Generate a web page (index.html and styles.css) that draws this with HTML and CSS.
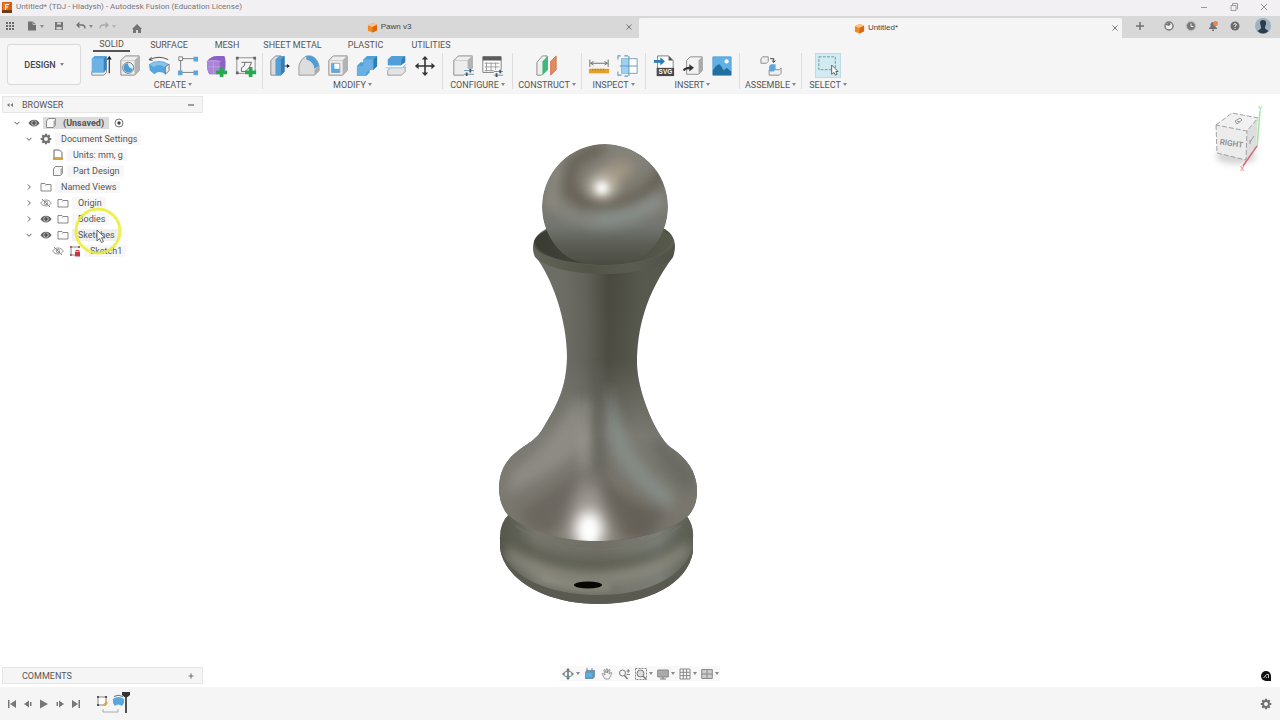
FILE: index.html
```html
<!DOCTYPE html>
<html lang="en">
<head>
<meta charset="utf-8">
<meta name="viewport" content="width=device-width, initial-scale=1">
<title>Untitled* - Autodesk Fusion</title>
<link rel="stylesheet" href="styles.css">
</head>
<body>
<svg class="sprite" aria-hidden="true">
  <symbol id="down" viewBox="0 0 12 12"><path d="M3.500 4.800 6 7.300 8.500 4.800" fill="none" stroke="#555" stroke-width="1"/></symbol>
  <symbol id="right" viewBox="0 0 12 12"><path d="M4.800 3.500 7.300 6 4.800 8.500" fill="none" stroke="#666" stroke-width="1"/></symbol>
  <symbol id="eye" viewBox="0 0 12 12"><path d="M.5 6C3 1.500 9 1.500 11.500 6 9 10.500 3 10.500.5 6Z" fill="#5c5c5c"/><circle cx="6" cy="6" r="2.600" fill="#ddd"/><circle cx="6" cy="6" r="1.900" fill="#555"/></symbol>
  <symbol id="eye-off" viewBox="0 0 12 12"><path d="M.7 6C3 2 9 2 11.300 6 9 10 3 10 .7 6Z" fill="none" stroke="#999"/><circle cx="6" cy="6" r="1.800" fill="none" stroke="#999"/><path d="M2 2 10 10" stroke="#888"/></symbol>
  <symbol id="folder" viewBox="0 0 12 12"><path d="M1 2.500H5L6 3.500H11V10H1Z M6 3.500 5.500 4.500" fill="#fafafa" stroke="#888"/></symbol>
  <symbol id="part" viewBox="0 0 12 12"><path d="M1.500 4 3.500 1.500H10.500V8L8.500 10.500H1.500Z" fill="#f8f8f8" stroke="#888"/><path d="M8.500 10V4.500L10.500 2V8Z" fill="#aaa"/></symbol>
  <symbol id="gear" viewBox="0 0 12 12"><g stroke="#707070" stroke-width="2.200"><path d="M6 .7V11.300M.7 6H11.300M2.300 2.300 9.700 9.700M9.700 2.300 2.300 9.700"/></g><circle cx="6" cy="6" r="3.900" fill="#707070"/><circle cx="6" cy="6" r="2" fill="#f5f5f5"/></symbol>
  <symbol id="model" viewBox="0 0 12 12"><path d="M1 3.500 6 1 11 3V9L6 11.500 1 9.500Z" fill="#f08a24"/><path d="M1 3.500 6 1 11 3 6 5.500Z" fill="#ffc388"/><path d="M6 5.500 11 3V9L6 11.500Z" fill="#d96814"/></symbol>
  <symbol id="box" viewBox="0 0 24 24"><path d="M2 6 7 1H22V17L17 22H2Z" fill="#ededed" stroke="#888"/><path d="M17 22V6L22 1V17Z" fill="#b4b4b4"/><path d="M2 6H17L22 1" fill="none" stroke="#bbb" stroke-width=".7"/></symbol>
</svg>

<header class="titlebar">
  <svg class="app-icon" viewBox="0 0 10 11"><rect width="10" height="11" rx="1" fill="#d95c0c"/><path d="M1 1H8L5 10H1Z" fill="#ef7b18"/><path d="M0 8H10V11H0Z" fill="#713b18"/><path d="M3.500 8V2.500H7M3.500 5H6" stroke="#fff" fill="none"/></svg>
  <h1 class="window-title">Untitled* (TDJ - Hladysh) - Autodesk Fusion (Education License)</h1>
  <div class="window-controls">
    <button aria-label="Minimize"><svg viewBox="0 0 10 10"><path d="M2 5.500H8" stroke="#999"/></svg></button>
    <button aria-label="Restore"><svg viewBox="0 0 10 10"><path d="M2 3.500H7V8.500H2ZM3.500 3V1.500H8.500V7H7.500" fill="none" stroke="#888" stroke-width=".8"/></svg></button>
    <button aria-label="Close"><svg viewBox="0 0 10 10"><path d="M2 2 8 8M8 2 2 8" stroke="#888" stroke-width=".8"/></svg></button>
  </div>
</header>

<div class="tabbar">
  <div class="quick">
    <button class="panel-toggle" aria-label="Data panel"><svg viewBox="0 0 12 12"><path d="M2 3H10M2 6H10M2 9H10" stroke="#6d6d6d" stroke-width="2" stroke-dasharray="2 1"/></svg></button>
    <button class="with-caret" aria-label="File"><svg viewBox="0 0 12 12"><path d="M2 1.500H7L10 4.500V10.500H2Z" fill="#717171"/><path d="M7 1.500V4.500H10" stroke="#ddd" stroke-width=".7" fill="none"/></svg><i class="caret"></i></button>
    <button class="save" aria-label="Save"><svg viewBox="0 0 12 12"><path d="M2 2H10V10H2Z" fill="#777"/><path d="M4 2.500H8V4.500H4ZM3.500 7H8.500V9.500H3.500Z" fill="#d6d6d6"/></svg></button>
    <button class="undo" aria-label="Undo"><svg viewBox="0 0 12 12"><path d="M2 5H7Q10 5 10 8.500M4.500 2.500 2 5 4.500 7.500" fill="none" stroke="#707070" stroke-width="1.300"/></svg><i class="caret"></i></button>
    <button class="with-caret faded" aria-label="Redo"><svg viewBox="0 0 12 12"><path d="M10 5H5Q2 5 2 8.500M7.500 2.500 10 5 7.500 7.500" fill="none" stroke="#707070" stroke-width="1.300"/></svg><i class="caret"></i></button>
    <button class="home" aria-label="Home"><svg viewBox="0 0 12 12"><path d="M1 7 6 2 11 7H10V11H7V8H5V11H2V7Z" fill="#747474"/></svg></button>
  </div>
  <div class="doc-tab"><button class="doc-name"><svg viewBox="0 0 12 12"><use href="#model"/></svg>Pawn v3</button><button class="doc-close" aria-label="Close Pawn v3"><svg viewBox="0 0 10 10"><path d="M2.500 2.500 7.500 7.500M7.500 2.500 2.500 7.500" stroke="#777"/></svg></button></div>
  <div class="doc-tab active"><button class="doc-name"><svg viewBox="0 0 12 12"><use href="#model"/></svg>Untitled*</button><button class="doc-close" aria-label="Close Untitled"><svg viewBox="0 0 10 10"><path d="M2.500 2.500 7.500 7.500M7.500 2.500 2.500 7.500" stroke="#777"/></svg></button></div>
  <div class="account">
    <button class="plus" aria-label="New design"><svg viewBox="0 0 12 12"><path d="M6 2V10M2 6H10" stroke="#707070" stroke-width="1.500"/></svg></button>
    <button aria-label="Extensions"><svg viewBox="0 0 12 12"><circle cx="6" cy="6" r="4" fill="#eee" stroke="#777" stroke-width="1.400"/><path d="M3 4 6 2.500 8 4 6 6 3 5Z" fill="#777"/></svg></button>
    <button aria-label="Job status"><svg viewBox="0 0 12 12"><circle cx="6" cy="6" r="4" fill="#777"/><circle cx="6" cy="6" r="4.700" fill="none" stroke="#aaa" stroke-width=".7"/><path d="M6 3.500V6.500H8.500" fill="none" stroke="#eee"/></svg></button>
    <button aria-label="Notifications"><svg viewBox="0 0 12 12"><path d="M2 9V8L3.500 7V4Q4 2 6 2 8.500 2 8.500 5V7L10 8V9ZM5 9.500H7V11H5Z" fill="#707070"/><circle cx="8.500" cy="3.500" r="2.500" fill="#e88650"/></svg></button>
    <button aria-label="Help"><svg viewBox="0 0 12 12"><circle cx="6" cy="6" r="4.500" fill="#6c6c6c"/><path d="M4.500 4.500Q6 2.500 7.500 4.500 7.500 5.500 6 6.300V7M6 8V9" fill="none" stroke="#fff"/></svg></button>
    <button class="avatar" aria-label="Profile"><svg viewBox="0 0 16 16"><circle cx="8" cy="8" r="8" fill="#9db2c2"/><path d="M5 5Q5 2 8 2 11.500 2 11 6L10 9V10.500L13.500 13Q8 18 2.500 13L6 10.500V9Z" fill="#2c3d4c"/></svg></button>
  </div>
</div>

<div class="ribbon">
  <button class="workspace">DESIGN<i class="caret"></i></button>
  <div class="ribbon-main">
    <nav class="ribbon-tabs">
      <button class="current">SOLID</button><button>SURFACE</button><button>MESH</button><button class="wide">SHEET METAL</button><button class="wide">PLASTIC</button><button>UTILITIES</button>
    </nav>
    <div class="groups">
      <section class="group create">
        <div class="tools">
          <button aria-label="Extrude"><svg viewBox="0 0 24 24"><path d="M2 18V22H15L18 19V3" fill="#eee" stroke="#888"/><path d="M2 4 5 1H18V15L15 19H2Z" fill="#5aa4dc"/><path d="M2 4H15V19H2Z" fill="#6bb3e7"/><path d="M15 4 18 1V15L15 19Z" fill="#3b82b8"/><path d="M21 20V3M19 5 21 2 23 5" fill="none" stroke="#222" stroke-width="1.200"/></svg></button>
          <button aria-label="Hole"><svg viewBox="0 0 24 24"><use href="#box"/><circle cx="10" cy="14" r="6" fill="#e1eff9" stroke="#777"/><path d="M10 9A5 5 0 1 0 15 15 5 5 0 0 1 10 9Z" fill="#4b9bd7"/></svg></button>
          <button aria-label="Revolve"><svg viewBox="0 0 24 24"><path d="M1 10Q12 3 23 10V17L19 21Q12 16 7 21L2 17Z" fill="#57a5de"/><path d="M2 10Q12 5 22 10L18 13Q12 9 6 13Z" fill="#86c4ef"/><path d="M19 13 23 10V17L19 21Z" fill="#eee" stroke="#777"/><path d="M2 5Q12 0 22 5M4 2.500 1 5 5 6" fill="none" stroke="#444"/></svg></button>
          <button aria-label="Create sketch"><svg viewBox="0 0 24 24"><path d="M5 4H20M4 5V19H20" fill="none" stroke="#777"/><path d="M2 2H6V6H2Z" fill="#fff" stroke="#777"/><path d="M18 2H23V7H18ZM1 17H6V22H1ZM18 17H23V22H18Z" fill="#5da6da"/></svg></button>
          <button aria-label="Create form"><svg viewBox="0 0 24 24"><path d="M1 7Q5 1 12 1H20Q22 4 21 16L16 21H4Q1 18 1 7Z" fill="#8c62c4"/><path d="M1 7Q6 4 15 7V20Q7 22 3 20Q1 16 1 7Z" fill="#a984d8"/><path d="M1 7Q8 5 16 7M8 6V20M2 13H16" fill="none" stroke="#bfa2e2"/><path d="M15 13H19V17H23V21H19V24H15V21H11V17H15Z" fill="#27a850"/></svg></button>
          <button aria-label="Derive"><svg viewBox="0 0 24 24"><path d="M2 3H22V20H2Z" fill="none" stroke="#888"/><path d="M1 2H4V5H1ZM20 2H23V5H20ZM1 18H4V21H1Z" fill="#666"/><path d="M7 8H18Q17 14 11 18H7V14Q11 13 11 8" fill="none" stroke="#666"/><path d="M15 13H19V17H23V21H19V24H15V21H11V17H15Z" fill="#27a850"/></svg></button>
        </div>
        <button class="group-name">CREATE<i class="caret"></i></button>
      </section>
      <section class="group modify">
        <div class="tools">
          <button aria-label="Press pull"><svg viewBox="0 0 24 24"><path d="M2 6 7 1H13V22H2Z" fill="#ddd" stroke="#888"/><path d="M7 5 11 1H17V18L13 22H7Z" fill="#559fd6"/><path d="M13 5 17 1V18L13 22Z" fill="#397eb2"/><path d="M17 12H22M20 10.500 22 12 20 13.500Z" fill="#222" stroke="#222"/></svg></button>
          <button aria-label="Fillet"><svg viewBox="0 0 24 24"><path d="M1 11Q3 4 9 1H14Q21 3 23 12V17L18 22H1Z" fill="#ddd" stroke="#999"/><path d="M9 1H14Q21 3 23 12L18 15Q17 7 9 5Z" fill="#4f9dd6"/><path d="M18 16V22L23 17V12Z" fill="#aaa"/></svg></button>
          <button aria-label="Shell"><svg viewBox="0 0 24 24"><use href="#box"/><path d="M5 9H14V19H5Z" fill="#fff" stroke="#999"/><path d="M5 9H8V15H14V19H5Z" fill="#5caae0"/></svg></button>
          <button aria-label="Combine"><svg viewBox="0 0 24 24"><path d="M1 12 5 8H8V5L12 1H23V12L19 16H15V19L11 23H1Z" fill="#4f9fd8"/><path d="M8 5H19V16H15L11 19V23H1V12H8Z" fill="#69b0e4"/><path d="M19 5 23 1V12L19 16Z" fill="#327cb0"/></svg></button>
          <button aria-label="Split body"><svg viewBox="0 0 24 24"><path d="M3 5 7 1H22V8L18 12H3Z" fill="#4f9fd8"/><path d="M18 5 22 1V8L18 12Z" fill="#327cb0"/><path d="M3 17 7 13H22V18L18 22H3Z" fill="#e4e4e4" stroke="#999"/><path d="M1 13H18L23 9" fill="none" stroke="#fff" stroke-width="3"/><path d="M1 14H19L23 10" fill="none" stroke="#80b5d8"/></svg></button>
          <button aria-label="Move"><svg viewBox="0 0 24 24"><path d="M12 3V21M3 12H21" stroke="#333" stroke-width="1.700"/><path d="M12 1 15.500 5H8.500ZM12 23 8.500 19H15.500ZM1 12 5 8.500V15.500ZM23 12 19 15.500V8.500Z" fill="#333"/></svg></button>
        </div>
        <button class="group-name">MODIFY<i class="caret"></i></button>
      </section>
      <section class="group configure">
        <div class="tools">
          <button aria-label="Configure"><svg viewBox="0 0 24 24"><use href="#box"/><path d="M13 15H24V24H13Z" fill="#f5f5f5"/><path d="M13 17H24M13 21H24" stroke="#5e8dad"/><path d="M20 15V19M16 19V23" stroke="#456" stroke-width="2"/></svg></button>
          <button aria-label="Configuration table"><svg viewBox="0 0 24 24"><path d="M2 2H22V19H2Z" fill="#fff" stroke="#777"/><path d="M2 1.500H22V6H2Z" fill="#5c5c5c"/><path d="M4 9H20M4 13H20M4 17H20M6 8V18M11 8V18M16 8V18" stroke="#999"/><path d="M14 16H24V24H14Z" fill="#f5f5f5"/><path d="M14 18H24M14 22H24" stroke="#5e8dad"/><path d="M21 16V20M17 20V24" stroke="#456" stroke-width="2"/></svg></button>
        </div>
        <button class="group-name">CONFIGURE<i class="caret"></i></button>
      </section>
      <section class="group construct">
        <div class="tools"><button aria-label="Construct plane"><svg viewBox="0 0 24 24"><path d="M1 8 7 1H12V16L6 22H1Z" fill="#eee" stroke="#888"/><path d="M7 7 13 1V16L7 22Z" fill="#40b77c"/><path d="M16 7 22 1V16L16 22Z" fill="#e6895d" stroke="#cc7653"/></svg></button></div>
        <button class="group-name">CONSTRUCT<i class="caret"></i></button>
      </section>
      <section class="group inspect">
        <div class="tools">
          <button aria-label="Measure"><svg viewBox="0 0 24 24"><path d="M2 5V13M22 5V13M3 9H21M6 7 3 9 6 11M18 7 21 9 18 11" fill="none" stroke="#666"/><path d="M1 15H23V20H1Z" fill="#e0a02c"/><path d="M5 15V17M8 15V17M11 15V17M14 15V17M17 15V17" stroke="#b37a1f"/></svg></button>
          <button aria-label="Section"><svg viewBox="0 0 24 24"><path d="M5 4H22V20H5Z" fill="#fff" stroke="#779cae"/><path d="M5 4H13V20H5Z" fill="#9dd1f1"/><path d="M13 1V23M3 12H22M4 1H1V5M1 18V22H5M8 1H12M8 23H12" fill="none" stroke="#619dbd" stroke-width="1.200"/></svg></button>
        </div>
        <button class="group-name">INSPECT<i class="caret"></i></button>
      </section>
      <section class="group insert">
        <div class="tools">
          <button aria-label="Insert SVG"><svg viewBox="0 0 24 24"><path d="M5 1H17L22 6V22H5Z" fill="#fff" stroke="#777"/><path d="M17 1V6H22Z" fill="#555"/><path d="M4 14H23V23H4Z" fill="#484848"/><path d="M1 7H9" stroke="#267eb6" stroke-width="3"/><path d="M8 2.500 13 7 8 11.500Z" fill="#267eb6"/><text class="svg-mark" x="13.500" y="21" text-anchor="middle">SVG</text></svg></button>
          <button aria-label="Insert derive"><svg viewBox="0 0 24 24"><path d="M5 6 9 2H22V17L18 21H5Z" fill="#f2f2f2" stroke="#888"/><path d="M18 6 22 2V17L18 21Z" fill="#aaa"/><path d="M2 17Q3 14 9 14" fill="none" stroke="#333" stroke-width="2.500"/><path d="M8 10 13 14 8 18Z" fill="#333"/></svg></button>
          <button aria-label="Insert image"><svg viewBox="0 0 24 24"><path d="M2 2H22V22H2Z" fill="#60b0e6" stroke="#5ba5d3"/><circle cx="17" cy="7" r="2.300" fill="#fff"/><path d="M2 17Q6 10 9 10 11 11 14 17L17 14 22 18V22H2Z" fill="#246d9f"/></svg></button>
        </div>
        <button class="group-name">INSERT<i class="caret"></i></button>
      </section>
      <section class="group assemble">
        <div class="tools"><button aria-label="Assemble"><svg viewBox="0 0 24 24"><path d="M1 4 3 2H9V7L7 9H1ZM10 16H21L23 14V20L21 22H10Z" fill="#eee" stroke="#888"/><path d="M10 12 12 10H17V15L15 18H10Z" fill="#5ea6db"/><path d="M11 4H15V8M13 6 15 8 17 6" fill="none" stroke="#333"/></svg></button></div>
        <button class="group-name">ASSEMBLE<i class="caret"></i></button>
      </section>
      <section class="group select">
        <div class="tools"><button class="selected" aria-label="Select"><svg viewBox="0 0 24 24"><path d="M2 2H20V16H2Z" fill="none" stroke="#5a9b93" stroke-dasharray="3 1.500"/><path d="M16 11V21L18.500 19 20 22 22 21 20.500 18H23Z" fill="#fff" stroke="#555"/></svg></button></div>
        <button class="group-name">SELECT<i class="caret"></i></button>
      </section>
    </div>
  </div>
</div>

<main class="viewport">
  <svg class="pawn" viewBox="490 134 220 480" role="img" aria-label="Pawn body">
    <defs>
      <filter id="b3" filterUnits="userSpaceOnUse" x="470" y="114" width="260" height="520"><feGaussianBlur stdDeviation="3"/></filter>
      <filter id="b6" filterUnits="userSpaceOnUse" x="470" y="114" width="260" height="520"><feGaussianBlur stdDeviation="6"/></filter>
      <filter id="b10" filterUnits="userSpaceOnUse" x="470" y="114" width="260" height="520"><feGaussianBlur stdDeviation="10"/></filter>
      <linearGradient id="neck" gradientUnits="userSpaceOnUse" x1="562" y1="0" x2="642" y2="0"><stop offset="0" stop-color="#6c6d64"/><stop offset=".3" stop-color="#61615a"/><stop offset=".58" stop-color="#48483e"/><stop offset=".8" stop-color="#4e4f45"/><stop offset="1" stop-color="#56574d"/></linearGradient>
      <linearGradient id="lower" gradientUnits="userSpaceOnUse" x1="0" y1="265" x2="0" y2="541"><stop offset="0" stop-color="#77766e" stop-opacity="0"/><stop offset=".35" stop-color="#77766e" stop-opacity=".1"/><stop offset=".62" stop-color="#7d7c75" stop-opacity=".95"/><stop offset="1" stop-color="#78746b"/></linearGradient>
      <linearGradient id="ballfill" x1="0" y1="0" x2="0" y2="1"><stop offset="0" stop-color="#85837b"/><stop offset=".45" stop-color="#7d7a71"/><stop offset=".65" stop-color="#737670"/><stop offset=".8" stop-color="#5c5e55"/><stop offset="1" stop-color="#46473c"/></linearGradient>
      <linearGradient id="basefill" x1="0" x2="1"><stop offset="0" stop-color="#4f5046"/><stop offset=".2" stop-color="#77776e"/><stop offset=".5" stop-color="#716f66"/><stop offset=".8" stop-color="#7a7e75"/><stop offset="1" stop-color="#585a50"/></linearGradient>
      <linearGradient id="collar" x1="0" x2="1"><stop offset="0" stop-color="#626458"/><stop offset=".4" stop-color="#535448"/><stop offset=".7" stop-color="#5b5c51"/><stop offset="1" stop-color="#505146"/></linearGradient>
      <linearGradient id="bowl" x1="0" x2="1"><stop offset="0" stop-color="#3a3b33"/><stop offset=".5" stop-color="#45463b"/><stop offset="1" stop-color="#585a4e"/></linearGradient>
      <clipPath id="cbody"><path d="M535 256C552 277 567 320 567 357 566 390 557 405 542 430 536 439 529 443 523 447 508 457 500 468 499 487 499 499 502 508 508 515 530 533 564 541 597 541 635 541 672 531 689 515 696 506 697 499 697 489 696 471 687 458 670 447 656 435 638 394 637 364 637 330 645 295 673 257L604 270Z"/></clipPath>
      <clipPath id="cball"><path d="M560 251A63 63 0 1 1 650 251Q636 265 605 265 574 265 560 251Z"/></clipPath>
      <clipPath id="cbase"><path d="M509 514Q499 524 500 540V549C506 582 548 604 598 604 649 604 687 584 693 552V538Q694 526 687 516Z"/></clipPath>
    </defs>
    <g clip-path="url(#cbase)">
      <path d="M495 500H700V610H495Z" fill="url(#basefill)"/>
      <path d="M506 520Q506 545 548 558Q600 573 660 556Q690 543 689 520" fill="none" stroke="#5a5b50" stroke-width="12" opacity=".85" filter="url(#b6)"/>
      <path d="M516 526Q548 548 597 550Q646 548 681 526" fill="none" stroke="#77766b" stroke-width="1.500" opacity=".6"/>
      <path d="M506 552Q535 576 588 580Q650 578 688 547" fill="none" stroke="#9a988c" stroke-width="9" opacity=".8" filter="url(#b6)"/>
      <path d="M540 577Q575 591 610 588" fill="none" stroke="#aaa797" stroke-width="5" opacity=".5" filter="url(#b3)"/>
      <path d="M499 546C508 577 549 595 598 595 648 595 684 577 694 546V610H499Z" fill="#5a5a50"/>
      <ellipse cx="588" cy="585" rx="14" ry="3.500" fill="#080704"/>
    </g>
    <g clip-path="url(#cbody)">
      <path d="M495 250H700V545H495Z" fill="url(#neck)"/>
      <path d="M495 250H700V545H495Z" fill="url(#lower)"/>
      <path d="M576 395Q557 440 514 470L504 495Q548 477 590 443Z" fill="#94928a" opacity=".75" filter="url(#b6)"/>
      <path d="M609 385Q625 460 672 491V512Q620 480 604 430Z" fill="#87908a" opacity=".85" filter="url(#b6)"/>
      <path d="M588 400Q588 440 583 468" fill="none" stroke="#a5a39a" stroke-width="8" opacity=".7" filter="url(#b6)"/>
      <path d="M598 370Q596 420 601 475" fill="none" stroke="#57574e" stroke-width="10" opacity=".6" filter="url(#b6)"/>
      <path d="M580 470Q555 490 520 510L530 530 565 532Z" fill="#68645b" opacity=".8" filter="url(#b6)"/>
      <path d="M598 470Q625 505 665 512L650 538H608Z" fill="#625d54" opacity=".85" filter="url(#b6)"/>
      <path d="M657 435 694 470V495Q673 485 650 445Z" fill="#606158" opacity=".6" filter="url(#b6)"/>
      <path d="M588 480 561 545H619Z" fill="#b3afa8" filter="url(#b10)"/>
      <ellipse cx="589" cy="530" rx="13" ry="18" fill="#fff" filter="url(#b6)"/>
      <ellipse cx="589" cy="533" rx="6" ry="12" fill="#fff" opacity=".6" filter="url(#b3)"/>
    </g>
    <path d="M546 229C532 236 531 248 535 257 547 269 577 274 604 274 635 274 666 267 673 257 677 246 675 235 665 229Z" fill="url(#collar)"/>
    <ellipse cx="604" cy="243" rx="70" ry="22" fill="url(#bowl)"/>
    <path d="M534 243Q543 264 604 265Q665 264 674 240" fill="none" stroke="#66675c" opacity=".5"/>
    <g clip-path="url(#cball)">
      <circle cx="605" cy="207" r="63" fill="url(#ballfill)"/>
      <path d="M604 147Q560 160 570 190Q586 213 628 203Q652 195 665 166" fill="none" stroke="#655f53" stroke-width="13" opacity=".9" filter="url(#b6)"/>
      <path d="M590 219Q626 222 662 198" fill="none" stroke="#8f9894" stroke-width="16" opacity=".75" filter="url(#b6)"/>
      <path d="M549 199Q560 215 592 220" fill="none" stroke="#929189" stroke-width="11" opacity=".65" filter="url(#b6)"/>
      <path d="M596 179Q608 154 634 164Q628 183 603 190Z" fill="#a39783" filter="url(#b6)"/>
      <path d="M560 165Q551 181 551 205" fill="none" stroke="#999890" stroke-width="9" opacity=".6" filter="url(#b6)"/>
      <ellipse cx="602" cy="187" rx="14" ry="12" fill="#c8c2b6" filter="url(#b6)"/>
      <circle cx="602" cy="188" r="6" fill="#fff" filter="url(#b3)"/>
    </g>
  </svg>

  <aside class="browser">
    <div class="panel-head"><button class="collapse" aria-label="Collapse"><svg viewBox="0 0 8 8"><path d="M3.500 2V6L1 4ZM7 2V6L4.500 4Z" fill="#777"/></svg></button><h2>BROWSER</h2><button class="panel-action" aria-label="Minimize browser"><svg viewBox="0 0 8 8"><path d="M1 4H7" stroke="#777" stroke-width="1.400"/></svg></button></div>
    <ul class="tree">
      <li class="root"><svg><use href="#down"/></svg><svg><use href="#eye"/></svg><span class="root-label"><svg><use href="#part"/></svg><b>(Unsaved)</b></span><svg viewBox="0 0 12 12"><circle cx="6" cy="6" r="4" fill="none" stroke="#666" stroke-width=".9"/><circle cx="6" cy="6" r="1.700" fill="#444"/></svg></li>
      <li class="level1"><svg><use href="#down"/></svg><svg><use href="#gear"/></svg><span>Document Settings</span></li>
      <li class="level2"><i></i><svg viewBox="0 0 12 12"><path d="M2 1H7.500L10 3.500V9H2Z" fill="#fff" stroke="#666"/><path d="M1 8.500H11V11H1Z" fill="#d6a23b"/></svg><span>Units: mm, g</span></li>
      <li class="level2"><i></i><svg><use href="#part"/></svg><span>Part Design</span></li>
      <li class="level1"><svg><use href="#right"/></svg><svg><use href="#folder"/></svg><span>Named Views</span></li>
      <li class="level1"><svg><use href="#right"/></svg><svg><use href="#eye-off"/></svg><svg><use href="#folder"/></svg><span>Origin</span></li>
      <li class="level1"><svg><use href="#right"/></svg><svg><use href="#eye"/></svg><svg><use href="#folder"/></svg><span>Bodies</span></li>
      <li class="level1 hover"><svg><use href="#down"/></svg><svg><use href="#eye"/></svg><svg><use href="#folder"/></svg><span>Sketches</span></li>
      <li class="level2"><i></i><svg><use href="#eye-off"/></svg><svg viewBox="0 0 12 12"><path d="M2 2H10M2 2V10H6" fill="none" stroke="#888"/><path d="M1 1H3V3H1ZM9 1H11V3H9ZM1 9H3V11H1Z" fill="#a66"/><path d="M6 7H11V11.500H6Z" fill="#cd3445"/><path d="M7 7V5.500H10V7" fill="none" stroke="#cd3445"/></svg><span>Sketch1</span></li>
    </ul>
  </aside>

  <svg class="pointer" viewBox="0 0 50 50" aria-hidden="true"><circle cx="25" cy="25" r="22" fill="none" stroke="#e9ed35" stroke-width="3" opacity=".85"/><path d="M24 24V35L26.500 32.500 28.500 36.500 30.500 35.500 28.500 31.800H32Z" fill="#fff" stroke="#555" stroke-width=".9"/></svg>

  <svg class="viewcube" viewBox="1205 100 70 78" role="img" aria-label="View cube">
    <ellipse cx="1236" cy="156" rx="20" ry="8" fill="#d4d4d4" filter="url(#soft)"/>
    <defs><filter id="soft" x="-30%" y="-60%" width="160%" height="220%"><feGaussianBlur stdDeviation="3"/></filter></defs>
    <path d="M1216 125 1232 113 1258 118 1247 131Z" fill="#f1f1f1"/><path d="M1216 125 1247 131 1246 160 1217 153Z" fill="#ececec"/><path d="M1247 131 1258 118 1256 146 1246 160Z" fill="#dedede"/>
    <path d="M1216 125 1232 113 1258 118 1247 131ZM1216 125 1217 153 1246 160 1247 131" fill="none" stroke="#999" stroke-width=".9" stroke-dasharray="5 2"/>
    <path d="M1260 111 1257 147" stroke="#9fe59f" stroke-width="1.500"/><path d="M1257 146 1243 166" stroke="#d66c7e" stroke-width="1.500"/>
    <text class="face" transform="translate(1231 146) rotate(8)" text-anchor="middle">RIGHT</text><path d="M1235 121 1240 118 1242 120 1237 124ZM1237 121 1240 122M1250 142 1254 136M1250 140 1250 144" fill="none" stroke="#999"/>
    <text class="axis y" x="1258" y="111">Y</text><text class="axis x" x="1240" y="171">X</text>
  </svg>

  <div class="comments panel-head"><h2>COMMENTS</h2><button class="panel-action" aria-label="Add comment"><svg viewBox="0 0 8 8"><path d="M4 1.500V6.500M1.500 4H6.500" stroke="#777" stroke-width="1.200"/></svg></button></div>

  <div class="navbar">
    <button class="with-caret" aria-label="Orbit"><svg viewBox="0 0 12 12"><path d="M6 0 8 2.500H6.700V9.500H8L6 12 4 9.500H5.300V2.500H4Z" fill="#667"/><path d="M0 6 2.500 4V8ZM12 6 9.500 4V8Z" fill="#667"/><ellipse cx="6" cy="6" rx="4.500" ry="2.500" fill="none" stroke="#5a8f80"/></svg><i class="caret"></i></button>
    <button aria-label="Look at"><svg viewBox="0 0 12 12"><path d="M1 4 3 2H11V9L9 11H1Z" fill="#6c98b8"/><path d="M2 5H8V9H2Z" fill="#5daee5"/><path d="M3 0V3M8 0V3" stroke="#777"/></svg></button>
    <button aria-label="Pan"><svg viewBox="0 0 12 12"><path d="M4 11 1 6Q1 5 2 5.500L4 7 2.800 2Q3.500 1 4 2L5.200 5V1Q6 0 6.500 1V5L8 1.500Q9 1 9 2L8 6 10 4.500Q11.500 4.500 10.500 6L8 11Z" fill="#f4f4f4" stroke="#888" stroke-width=".8"/></svg></button>
    <button aria-label="Zoom"><svg viewBox="0 0 12 12"><circle cx="4.500" cy="5" r="3" fill="none" stroke="#777"/><path d="M6.500 7.500 9.500 11" stroke="#777" stroke-width="1.500"/><path d="M8.500 3H12M10.200 1V5M8.500 6.500H12" stroke="#666" stroke-width=".8"/></svg></button>
    <button class="with-caret" aria-label="Fit"><svg viewBox="0 0 12 12"><path d="M.5.500H11.500V11.500H.5Z" fill="none" stroke="#888" stroke-dasharray="2 1"/><circle cx="5.500" cy="5.500" r="3.500" fill="#ddd" stroke="#777"/><path d="M8 8 11 11" stroke="#777" stroke-width="1.500"/></svg><i class="caret"></i></button>
    <button class="with-caret" aria-label="Display settings"><svg viewBox="0 0 12 12"><path d="M.7 2H11.300V9H.7Z" fill="#aaa" stroke="#888"/><path d="M3 11H9M6 9V11" stroke="#777"/></svg><i class="caret"></i></button>
    <button class="with-caret" aria-label="Grid"><svg viewBox="0 0 12 12"><path d="M1 1H11V11H1ZM1 4.300H11M1 7.600H11M4.300 1V11M7.600 1V11" fill="none" stroke="#888"/></svg><i class="caret"></i></button>
    <button class="with-caret" aria-label="Viewports"><svg viewBox="0 0 12 12"><path d="M.7 1.500H11.300V10.500H.7Z" fill="#ccc" stroke="#888"/><path d="M6 1.500V10.500M.7 6H11.300" stroke="#888"/></svg><i class="caret"></i></button>
  </div>
  <button class="feedback" aria-label="Assistant"><svg viewBox="0 0 12 12"><path d="M6 1A5 5 0 1 0 6 11H11V6A5 5 0 0 0 6 1Z" fill="#111"/><path d="M3.500 8 6.500 4.500H8.500V8M5.500 6.500 7 8" fill="none" stroke="#ddd" stroke-width=".9"/></svg></button>
</main>

<footer class="timeline">
  <div class="playback">
    <button aria-label="First"><svg viewBox="0 0 10 10"><path d="M1 1H2.500V9H1ZM9 1V9L3 5Z" fill="#777"/></svg></button>
    <button aria-label="Previous"><svg viewBox="0 0 10 10"><path d="M6 1.500V8.500L1 5ZM7 3H8.500V7H7Z" fill="#777"/></svg></button>
    <button aria-label="Play"><svg viewBox="0 0 10 10"><path d="M1 .5V9.500L9 5Z" fill="#777"/></svg></button>
    <button aria-label="Next"><svg viewBox="0 0 10 10"><path d="M4 1.500V8.500L9 5ZM1.500 3H3V7H1.500Z" fill="#777"/></svg></button>
    <button aria-label="Last"><svg viewBox="0 0 10 10"><path d="M7.500 1H9V9H7.500ZM1 1V9L7 5Z" fill="#777"/></svg></button>
  </div>
  <svg class="features" viewBox="0 0 36 26" role="img" aria-label="Sketch and revolve features"><path d="M2 6H10V14H2Z" fill="#fff" stroke="#888"/><path d="M1 5H3V7H1ZM9 5H11V7H9ZM1 13H3V15H1Z" fill="#555"/><path d="M7 14 10 10 12 12 9 15Z" fill="#e1a83b"/><path d="M17 8Q22 4 28 8V12L26 15Q22 12 19 15L17 12Z" fill="#5aa7dd"/><path d="M18 5.500Q22 3 27 5.500" fill="none" stroke="#457792"/><path d="M7 18V21H22V18" fill="none" stroke="#aaa"/><path d="M26 1H34V4L31.500 6H28.500L26 4Z" fill="#333"/><path d="M30 4V22" stroke="#333" stroke-width="1.700"/></svg>
  <button class="settings" aria-label="Settings"><svg viewBox="0 0 12 12"><use href="#gear"/></svg></button>
</footer>
</body>
</html>
```

FILE: styles.css
```css
* { box-sizing: border-box; }
body { margin: 0; min-height: 100vh; display: flex; flex-direction: column; background: #fff; color: #555; font: 9px/12px Roboto, sans-serif; overflow: hidden; }
button { border: 0; margin: 0; padding: 0; background: none; color: inherit; font: inherit; display: flex; align-items: center; justify-content: center; flex: none; }
h1, h2 { margin: 0; font: inherit; }
svg { display: block; flex: none; }
.sprite { width: 0; height: 0; position: absolute; }
.caret { display: inline-block; border: 2px solid transparent; border-top: 3px solid #888; border-bottom: 0; margin-left: 4px; flex: none; }

.titlebar { height: 16px; display: flex; align-items: center; background: #f3f0f3; padding: 0 1px 2px 2px; }
.app-icon { width: 10px; height: 11px; margin-right: 4px; }
.window-title { font: 8px/12px Roboto, sans-serif; color: #777; flex: 1; white-space: nowrap; }
.window-controls { display: flex; }
.window-controls button { width: 30px; }
.window-controls svg { width: 10px; height: 10px; }

.tabbar { height: 22px; display: grid; grid-template-columns: 156px 1fr 1fr 158px; background: #d9d8d8; }
.quick { display: flex; align-items: center; padding: 0 0 2px 4px; }
.quick svg { width: 12px; height: 12px; }
.quick .caret { margin-left: 2px; }
.quick .panel-toggle, .quick .save { margin-right: 10px; }
.quick .with-caret { margin-right: 9px; }
.quick .undo { margin-right: 5px; }
.quick .home { padding: 4px 0 0 6px; }
.faded { opacity: .45; }
.doc-tab { display: flex; align-items: stretch; padding-left: 3px; }
.doc-tab.active { background: #f5f5f5; margin-top: 2px; padding-left: 5px; border-radius: 2px 2px 0 0; }
.doc-name { flex: 1; font: 8px/12px "Liberation Sans", sans-serif; color: #444; gap: 3px; }
.doc-name svg { width: 11px; height: 11px; }
.doc-close { width: 20px; }
.doc-tab.active .doc-close { width: 14px; }
.doc-close svg { width: 10px; height: 10px; }
.account { display: flex; align-items: center; padding: 0 8px 2px 7px; }
.account button { width: 22px; }
.account svg { width: 12px; height: 12px; }
.account .plus { margin-right: 7px; }
.account .avatar { margin-left: 6px; }
.account .avatar svg { width: 16px; height: 16px; }

.ribbon { background: #f5f5f5; display: flex; height: 56px; }
.workspace { width: 74px; height: 41px; margin: 6px 5px 0 7px; border: 1px solid #d9d9d9; border-radius: 3px; background: #f8f8f8; font-weight: 500; color: #444; }
.ribbon-main { flex: 1; }
.ribbon-tabs { display: flex; padding-left: 7px; height: 15px; }
.ribbon-tabs button { width: 58px; height: 14px; white-space: nowrap; }
.ribbon-tabs .current { width: 37px; margin-right: 10px; border-bottom: 2px solid #555; }
.ribbon-tabs .wide { width: 73px; }
.groups { display: flex; height: 36px; margin-left: 1px; }
.group { display: flex; flex-direction: column; align-items: center; border-right: 1px solid #ddd; }
.group:last-child { border: 0; }
.create { width: 176px; padding-right: 3px; }
.modify { width: 180px; }
.configure { width: 70px; }
.construct { width: 69px; }
.inspect { width: 64px; }
.insert { width: 94px; }
.assemble { width: 62px; }
.select { width: 52px; }
.tools { display: flex; height: 25px; }
.tools button { width: 29px; height: 25px; }
.tools svg { width: 22px; height: 22px; }
.tools .selected { width: 26px; background: #d2ebf2; border: 1px solid #bcdde6; }
.svg-mark { font: bold 7px "Liberation Sans", sans-serif; fill: #fff; }
.group-name { height: 13px; white-space: nowrap; }
.group-name .caret { margin-left: 2px; }

.viewport { flex: 1; position: relative; background: #fff; overflow: hidden; }
.pawn { position: absolute; left: 490px; top: 40px; width: 220px; height: 480px; }
.browser { position: absolute; left: 2px; top: 2px; width: 201px; }
.panel-head { height: 17px; display: flex; align-items: center; background: #f5f5f5; border: 1px solid #e6e6e6; padding: 0 7px 0 19px; }
.panel-head h2 { flex: 1; color: #555; }
.panel-head svg { width: 8px; height: 8px; }
.collapse { margin: 0 8px 0 -16px; }
.tree { list-style: none; margin: 2px 0 0; padding: 0; display: flex; flex-direction: column; align-items: flex-start; }
.tree li { display: flex; align-items: center; height: 16px; padding: 0 4px 0 7px; }
.tree svg, .tree i { width: 12px; height: 12px; margin: 0 3px 0 2px; flex: none; }
.tree span { padding: 0 4px 0 6px; white-space: nowrap; background: #f7f7f7; }
.tree .level1 { padding-left: 19px; }
.tree .level2 { padding-left: 31px; }
.tree .hover span { background: #efefef; }
.tree .root-label { display: flex; align-items: center; background: #dcdcdc; padding: 0 5px 0 0; margin-right: 2px; }
.root-label b { padding-left: 3px; font-weight: 700; }
.pointer { position: absolute; left: 73px; top: 112px; width: 50px; height: 50px; }
.viewcube { position: absolute; right: 5px; top: 6px; width: 70px; height: 78px; }
.face { font: 500 8px Roboto, sans-serif; fill: #888; }
.axis { font: 7px Roboto, sans-serif; }
.axis.y { fill: #83dd83; }
.axis.x { fill: #e17383; }
.comments { position: absolute; left: 2px; bottom: 3px; width: 201px; }
.navbar { position: absolute; left: 50%; bottom: 6px; transform: translateX(-50%); height: 15px; display: flex; align-items: center; justify-content: center; width: 160px; background: #f8f8f8; gap: 5px; }
.navbar svg { width: 12px; height: 12px; }
.navbar .caret { margin-left: 2px; }
.navbar .with-caret { margin-right: -1px; }
.feedback { position: absolute; right: 8px; bottom: 5px; }
.feedback svg { width: 12px; height: 12px; }

.timeline { height: 33px; background: #f5f5f5; display: flex; align-items: center; padding: 0 8px 0 7px; }
.playback { display: flex; gap: 6px; }
.playback svg { width: 10px; height: 10px; }
.features { width: 36px; height: 26px; margin-left: 15px; }
.settings { margin-left: auto; }
.settings svg { width: 12px; height: 12px; }
```
